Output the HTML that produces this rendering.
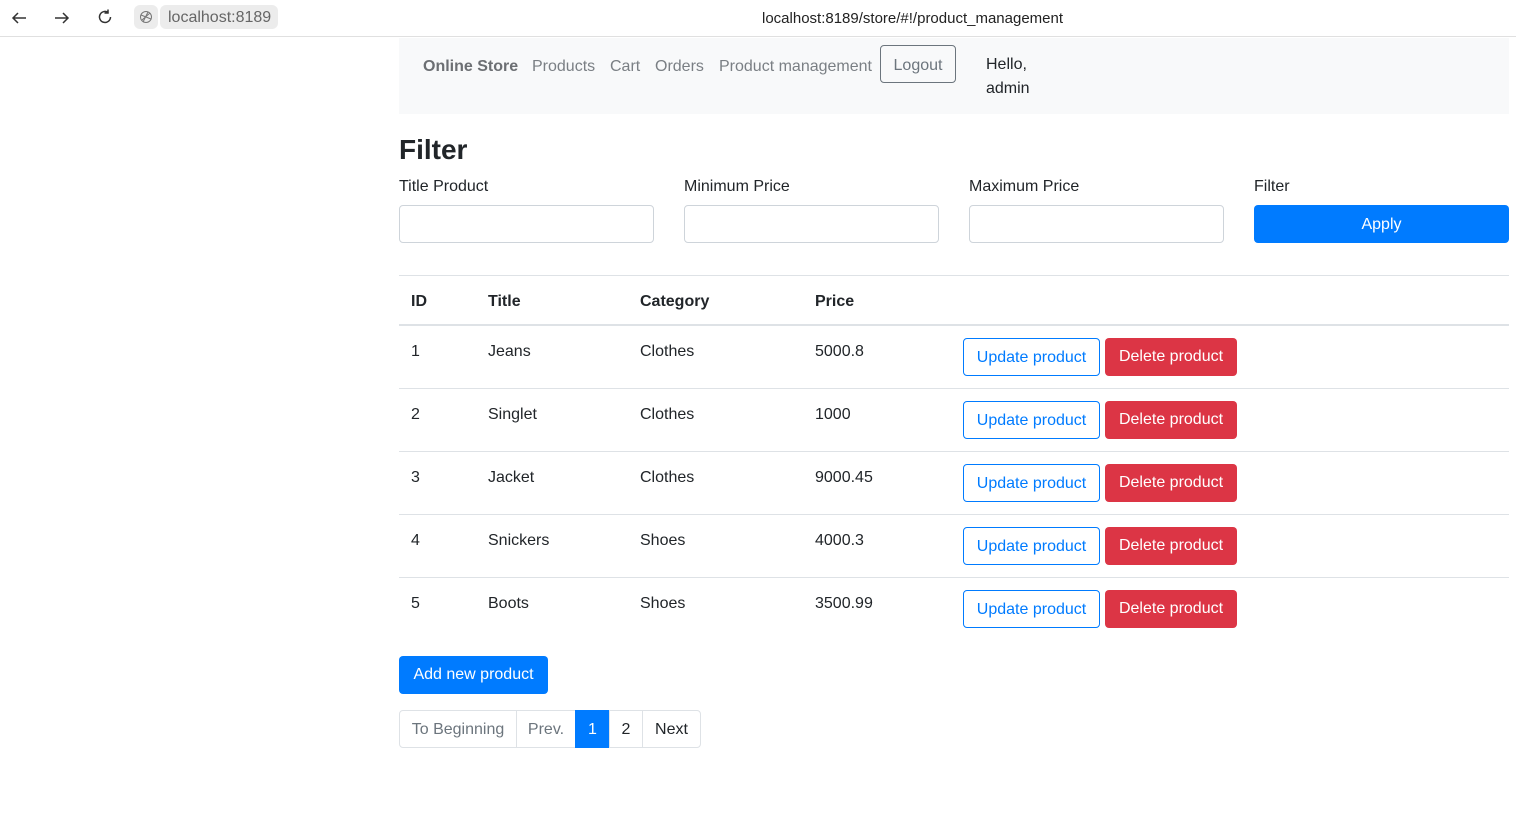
<!DOCTYPE html>
<html><head><meta charset="utf-8"><style>
*{box-sizing:border-box;margin:0;padding:0}
body{width:1516px;height:824px;background:#fff;font-family:"Liberation Sans",sans-serif;font-size:16px;color:#212529;position:relative;overflow:hidden}
.a{position:absolute;white-space:nowrap}
.t{margin-top:2px}
.bar{left:0;top:0;width:1516px;height:37px;border-bottom:1px solid #e0e0e0}
.nav{left:399px;top:38px;width:1110px;height:76px;background:#f8f9fa}
.nl{color:#7a7f84;font-size:16px;margin-top:2px}
.inp{height:38px;width:255px;border:1px solid #ced4da;border-radius:4px;top:205px}
.lbl{top:178px;font-size:16px}
.hr{left:399px;width:1110px;height:1px;background:#dee2e6}
.btn{border-radius:4px;font-size:16px;text-align:center;line-height:38px;height:38px}
.up{border:1px solid #007bff;color:#007bff;width:137px;left:963px;line-height:37px}
.del{background:#dc3545;color:#fff;width:132px;left:1105px}
.pg{top:710px;height:38px;border:1px solid #dee2e6;line-height:38px;text-align:center;color:#212529}
</style></head><body>
<div class="a bar"></div>
<svg class="a" style="left:10px;top:9px" width="18" height="18" viewBox="0 0 18 18"><path d="M16 9H3M8 4L3 9l5 5" stroke="#333" stroke-width="1.5" fill="none"/></svg>
<svg class="a" style="left:53px;top:9px" width="18" height="18" viewBox="0 0 18 18"><path d="M2 9h13M10 4l5 5-5 5" stroke="#333" stroke-width="1.5" fill="none"/></svg>
<svg class="a" style="left:96px;top:8px" width="18" height="18" viewBox="0 0 18 18"><path d="M14.5 9a5.5 5.5 0 1 1-2-4.3M12 1.5v3.5H8.5" stroke="#333" stroke-width="1.5" fill="none"/></svg>
<div class="a" style="left:134px;top:5px;width:24px;height:24px;border-radius:6px;background:#ececec"></div>
<svg class="a" style="left:139px;top:10px" width="14" height="14" viewBox="0 0 14 14"><circle cx="7" cy="7" r="5.5" stroke="#777" fill="none"/><path d="M2 5l10 4M4 12L9 2M3 10l8-7" stroke="#777" fill="none"/></svg>
<div class="a" style="left:160px;top:5px;width:118px;height:24px;border-radius:6px;background:#ececec;color:#666;font-size:16px;line-height:26px;padding-left:8px">localhost:8189</div>
<div class="a" style="left:762px;top:10px;font-size:15px;color:#222">localhost:8189/store/#!/product_management</div>

<div class="a nav"></div>
<div class="a t" style="left:423px;top:56px;font-weight:bold;color:#6c6f73">Online Store</div>
<div class="a nl" style="left:532px;top:56px">Products</div>
<div class="a nl" style="left:610px;top:56px">Cart</div>
<div class="a nl" style="left:655px;top:56px">Orders</div>
<div class="a nl" style="left:719px;top:56px">Product management</div>
<div class="a" style="left:880px;top:45px;width:76px;height:38px;border:1px solid #6c757d;border-radius:4px;color:#6c757d;text-align:center;line-height:39px">Logout</div>
<div class="a" style="left:986px;top:53px;line-height:24px">Hello,<br>admin</div>

<div class="a" style="left:399px;top:134px;font-size:28px;font-weight:bold;color:#212529">Filter</div>
<div class="a lbl" style="left:399px">Title Product</div>
<div class="a lbl" style="left:684px">Minimum Price</div>
<div class="a lbl" style="left:969px">Maximum Price</div>
<div class="a lbl" style="left:1254px">Filter</div>
<div class="a inp" style="left:399px"></div>
<div class="a inp" style="left:684px"></div>
<div class="a inp" style="left:969px"></div>
<div class="a btn" style="left:1254px;top:205px;width:255px;background:#007bff;color:#fff;line-height:40px">Apply</div>

<div class="a hr" style="top:275px"></div>
<div class="a t" style="left:411px;top:291px;font-weight:bold">ID</div>
<div class="a t" style="left:488px;top:291px;font-weight:bold">Title</div>
<div class="a t" style="left:640px;top:291px;font-weight:bold">Category</div>
<div class="a t" style="left:815px;top:291px;font-weight:bold">Price</div>
<div class="a hr" style="top:324px;height:2px"></div>

<div class="a t" style="left:411px;top:341px">1</div><div class="a t" style="left:488px;top:341px">Jeans</div><div class="a t" style="left:640px;top:341px">Clothes</div><div class="a t" style="left:815px;top:341px">5000.8</div>
<div class="a btn up" style="top:338px">Update product</div><div class="a btn del" style="top:338px">Delete product</div>
<div class="a hr" style="top:388px"></div>
<div class="a t" style="left:411px;top:404px">2</div><div class="a t" style="left:488px;top:404px">Singlet</div><div class="a t" style="left:640px;top:404px">Clothes</div><div class="a t" style="left:815px;top:404px">1000</div>
<div class="a btn up" style="top:401px">Update product</div><div class="a btn del" style="top:401px">Delete product</div>
<div class="a hr" style="top:451px"></div>
<div class="a t" style="left:411px;top:467px">3</div><div class="a t" style="left:488px;top:467px">Jacket</div><div class="a t" style="left:640px;top:467px">Clothes</div><div class="a t" style="left:815px;top:467px">9000.45</div>
<div class="a btn up" style="top:464px">Update product</div><div class="a btn del" style="top:464px">Delete product</div>
<div class="a hr" style="top:514px"></div>
<div class="a t" style="left:411px;top:530px">4</div><div class="a t" style="left:488px;top:530px">Snickers</div><div class="a t" style="left:640px;top:530px">Shoes</div><div class="a t" style="left:815px;top:530px">4000.3</div>
<div class="a btn up" style="top:527px">Update product</div><div class="a btn del" style="top:527px">Delete product</div>
<div class="a hr" style="top:577px"></div>
<div class="a t" style="left:411px;top:593px">5</div><div class="a t" style="left:488px;top:593px">Boots</div><div class="a t" style="left:640px;top:593px">Shoes</div><div class="a t" style="left:815px;top:593px">3500.99</div>
<div class="a btn up" style="top:590px">Update product</div><div class="a btn del" style="top:590px">Delete product</div>

<div class="a btn" style="left:399px;top:656px;width:149px;background:#007bff;color:#fff">Add new product</div>

<div class="a pg" style="left:399px;width:118px;color:#6c757d;border-radius:4px 0 0 4px">To Beginning</div>
<div class="a pg" style="left:516px;width:60px;color:#6c757d">Prev.</div>
<div class="a pg" style="left:575px;width:35px;background:#007bff;border-color:#007bff;color:#fff">1</div>
<div class="a pg" style="left:609px;width:34px">2</div>
<div class="a pg" style="left:642px;width:59px;border-radius:0 4px 4px 0">Next</div>
</body></html>
